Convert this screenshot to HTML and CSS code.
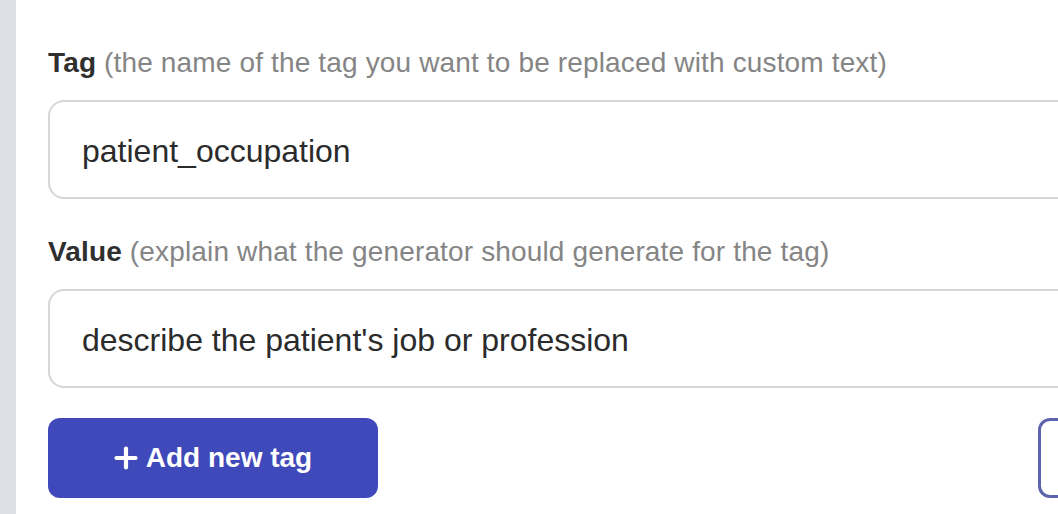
FILE: index.html
```html
<!DOCTYPE html>
<html>
<head>
<meta charset="utf-8">
<link rel="stylesheet" href="styles.css">
</head>
<body>
<div class="page">
  <aside class="rail"></aside>
  <main class="main">
    <form class="form">
      <div class="field">
        <label class="label"><b>Tag</b> <span class="hint">(the name of the tag you want to be replaced with custom text)</span></label>
        <div class="input">patient_occupation</div>
      </div>
      <div class="field">
        <label class="label"><b>Value</b> <span class="hint">(explain what the generator should generate for the tag)</span></label>
        <div class="input">describe the patient's job or profession</div>
      </div>
      <div class="actions">
        <button type="button" class="btn-primary">
          <svg class="plus" width="24" height="24" viewBox="0 0 24 24"><path d="M12 2.5v19M2.5 12h19" stroke="#fff" stroke-width="4.2" stroke-linecap="round" fill="none"/></svg>
          <span>Add new tag</span>
        </button>
        <button type="button" class="btn-outline"></button>
      </div>
    </form>
  </main>
</div>
</body>
</html>
```
FILE: styles.css
```css
html, body {
  margin: 0;
  padding: 0;
  background: #fff;
  overflow: hidden;
}
.page {
  display: flex;
  width: 1058px;
  height: 514px;
  overflow: hidden;
  font-family: "Liberation Sans", Arial, Helvetica, sans-serif;
}
.rail {
  flex: 0 0 16px;
  background: #dde0e4;
}
.main {
  flex: 1 1 auto;
  padding: 42px 0 0 32px;
  min-width: 0;
}
.form {
  width: 1132px;
  display: flex;
  flex-direction: column;
}
.field {
  display: flex;
  flex-direction: column;
  margin-bottom: 32px;
}
.field + .field {
  margin-bottom: 30px;
}
.label {
  font-size: 28px;
  line-height: 42px;
  color: #333;
  margin-bottom: 16px;
  letter-spacing: 0.15px;
}
.label b {
  font-weight: 700;
  color: #2f2f2f;
}
.hint {
  color: #858585;
}
.input {
  box-sizing: border-box;
  height: 99px;
  border: 2px solid #d6d6d6;
  border-radius: 16px;
  padding: 4px 32px 0;
  display: flex;
  align-items: center;
  font-size: 32px;
  color: #2b2b2b;
}
.actions {
  display: flex;
  align-items: center;
}
.btn-primary {
  width: 330px;
  height: 80px;
  border: none;
  border-radius: 12px;
  background: #4049ba;
  color: #fff;
  font-family: inherit;
  font-size: 28px;
  font-weight: 700;
  display: flex;
  align-items: center;
  justify-content: center;
  gap: 8px;
  padding: 0 0 0 0;
}
.plus {
  display: block;
}
.btn-outline {
  margin-left: auto;
  width: 142px;
  height: 80px;
  box-sizing: border-box;
  border: 3px solid #5e64ac;
  border-radius: 12px;
  background: #fff;
}
```
